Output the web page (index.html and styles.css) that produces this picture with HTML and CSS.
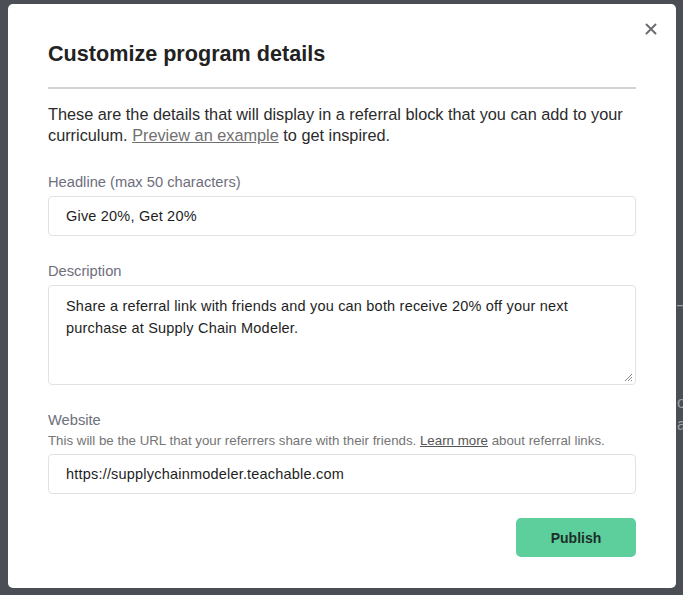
FILE: index.html
```html
<!DOCTYPE html>
<html>
<head>
<meta charset="utf-8">
<link rel="stylesheet" href="styles.css">
</head>
<body>
<div class="backdrop">
  <div class="behind">
    <span class="b1">–</span>
    <span class="b2">o</span>
    <span class="b3">a</span>
  </div>
  <div class="modal">
    <button class="close" aria-label="Close">
      <svg width="12" height="12" viewBox="0 0 12 12"><path d="M1.5 1.5 L10.5 10.5 M10.5 1.5 L1.5 10.5" stroke="#6b6d70" stroke-width="2" stroke-linecap="round"/></svg>
    </button>
    <h1 class="title">Customize program details</h1>
    <hr class="divider">
    <p class="intro">These are the details that will display in a referral block that you can add to your curriculum. <a href="#" class="link">Preview an example</a> to get inspired.</p>
    <div class="field">
      <label class="label">Headline (max 50 characters)</label>
      <div class="input">Give 20%, Get 20%</div>
    </div>
    <div class="field">
      <label class="label">Description</label>
      <div class="input textarea">Share a referral link with friends and you can both receive 20% off your next purchase at Supply Chain Modeler.
        <svg class="grip" width="10" height="10" viewBox="0 0 10 10"><path d="M9 2 L2 9 M9 5 L5 9 M9 8 L8 9" stroke="#888" stroke-width="1"/></svg>
      </div>
    </div>
    <div class="field">
      <label class="label">Website</label>
      <div class="help">This will be the URL that your referrers share with their friends. <a href="#" class="hlink">Learn more</a> about referral links.</div>
      <div class="input">https://supplychainmodeler.teachable.com</div>
    </div>
    <div class="actions">
      <button class="publish">Publish</button>
    </div>
  </div>
</div>
</body>
</html>
```
FILE: styles.css
```css
* { box-sizing: border-box; }
html, body { margin: 0; padding: 0; }
body {
  background: #4b4e55;
  font-family: "Liberation Sans", Arial, sans-serif;
  width: 683px;
  height: 595px;
  overflow: hidden;
}
.backdrop {
  position: relative;
  width: 683px;
  height: 595px;
  padding: 4px 7px 0 8px;
}
.behind { position: absolute; left: 677px; top: 0; color: #9a9da3; font-size: 16px; }
.behind span { position: absolute; left: 0; }
.b1 { top: 296px; }
.b2 { top: 394px; }
.b3 { top: 416px; }
.modal {
  position: relative;
  background: #fff;
  width: 668px;
  height: 584px;
  border-radius: 5px;
  padding: 36px 40px 0 40px;
}
.close {
  position: absolute;
  top: 19px;
  right: 19px;
  border: 0;
  background: none;
  padding: 0;
  width: 12px;
  height: 12px;
  display: flex;
}
.title {
  margin: 0;
  font-size: 21.6px;
  font-weight: 700;
  color: #222;
  line-height: 27px;
}
.divider {
  margin: 20px 0 0;
  border: 0;
  border-top: 2px solid #d3d3d3;
}
.intro {
  margin: 15px 0 0;
  font-size: 16.3px;
  line-height: 21px;
  color: #2b2b2b;
}
.link { color: #707070; text-decoration: underline; }
.field { margin-top: 26px; }
.field + .field { margin-top: 25px; }
.label {
  display: block;
  font-size: 14.7px;
  line-height: 20px;
  color: #6e6e7c;
  margin-bottom: 4px;
}
.help {
  font-size: 13.3px;
  line-height: 16px;
  color: #757575;
  margin-top: -1px;
  margin-bottom: 5px;
}
.hlink { color: #555; text-decoration: underline; }
.input {
  position: relative;
  height: 40px;
  border: 1px solid #e2e2e6;
  border-radius: 4px;
  padding: 0 17px;
  display: flex;
  align-items: center;
  font-size: 14.5px;
  letter-spacing: 0.2px;
  color: #1e1e1e;
}
.textarea {
  height: 100px;
  display: block;
  padding: 9px 40px 9px 17px;
  line-height: 22px;
}
.grip { position: absolute; right: 2px; bottom: 2px; }
.actions {
  display: flex;
  justify-content: flex-end;
  margin-top: 24px;
}
.publish {
  width: 120px;
  height: 39px;
  border: 0;
  border-radius: 5px;
  background: #5ccf9d;
  color: #1d2e29;
  font-family: inherit;
  font-size: 14px;
  font-weight: 700;
}
```
